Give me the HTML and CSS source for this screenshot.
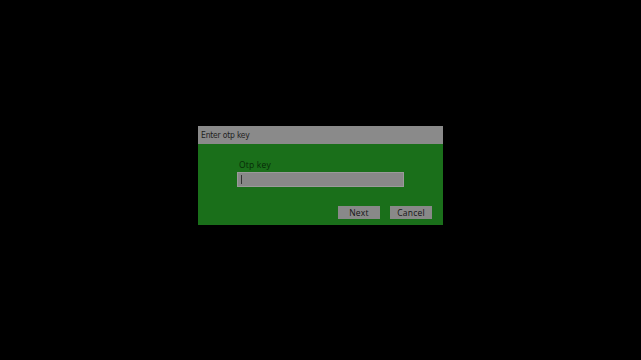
FILE: index.html
```html
<!DOCTYPE html>
<html>
<head>
<meta charset="utf-8">
<link rel="stylesheet" href="styles.css">
</head>
<body>
<div class="screen">
  <div class="dialog">
    <div class="titlebar">Enter otp key</div>
    <div class="content">
      <label class="label">Otp key</label>
      <div class="input"><span class="caret"></span></div>
      <div class="actions">
        <button class="btn">Next</button>
        <button class="btn">Cancel</button>
      </div>
    </div>
  </div>
</div>
</body>
</html>
```
FILE: styles.css
```css
html, body {
  margin: 0;
  padding: 0;
  background: #000;
}
.screen {
  width: 641px;
  height: 360px;
  display: flex;
  align-items: center;
  justify-content: center;
  box-sizing: border-box;
  padding-bottom: 9px;
}
.dialog {
  width: 245px;
  height: 99px;
  display: flex;
  flex-direction: column;
  background: #1a6f1a;
}
.titlebar {
  height: 18px;
  background: #8a8a8a;
  color: #1e1e1e;
  font-family: "DejaVu Sans Condensed", "DejaVu Sans", sans-serif;
  font-stretch: condensed;
  font-size: 8.5px;
  line-height: 18px;
  padding-left: 3px;
  letter-spacing: -0.2px;
}
.content {
  flex: 1;
  display: flex;
  flex-direction: column;
  padding: 15px 11px 0 39px;
}
.label {
  font-family: "Open Sans", sans-serif;
  font-size: 8.5px;
  line-height: 11px;
  color: #072a07;
  padding-left: 2px;
  margin-bottom: 2px;
  letter-spacing: 0.2px;
}
.input {
  width: 167px;
  height: 15px;
  box-sizing: border-box;
  background: #888888;
  border: 1px solid #9a9a9a;
  display: flex;
  align-items: center;
  padding-left: 3px;
}
.caret {
  width: 1px;
  height: 9px;
  background: #333;
}
.actions {
  display: flex;
  justify-content: flex-end;
  gap: 10px;
  margin-top: 19px;
}
.btn {
  width: 42px;
  height: 13px;
  padding: 0;
  border: none;
  background: #898989;
  color: #141414;
  font-family: "Open Sans", sans-serif;
  font-size: 8.5px;
  line-height: 13px;
  letter-spacing: 0.2px;
}
```
